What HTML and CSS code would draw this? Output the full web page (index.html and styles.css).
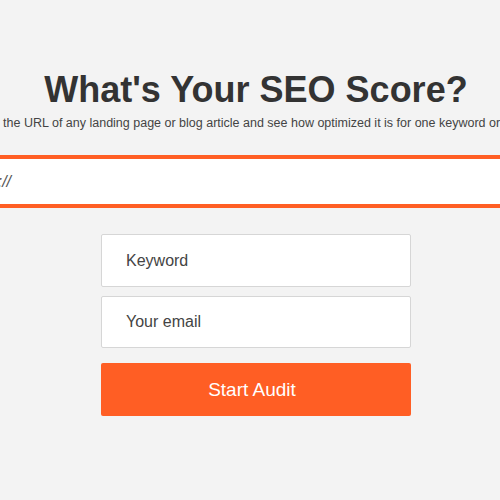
FILE: index.html
```html
<!DOCTYPE html>
<html lang="en">
<head>
<meta charset="utf-8">
<title>SEO Score</title>
<link rel="stylesheet" href="styles.css">
</head>
<body>
<main class="page">
  <section class="hero">
    <h1 class="title">What's Your SEO Score?</h1>
    <p class="subtitle">Enter the URL of any landing page or blog article and see how optimized it is for one keyword or phrase.</p>
    <div class="url-field"><span class="url-placeholder">http://</span></div>
    <form class="audit-form">
      <div class="field"><span class="placeholder">Keyword</span></div>
      <div class="field"><span class="placeholder">Your email</span></div>
      <button class="submit" type="button">Start Audit</button>
    </form>
  </section>
</main>
</body>
</html>
```

FILE: styles.css
```css
html, body {
  margin: 0;
  padding: 0;
  background: #f3f3f3;
  overflow: hidden;
}
body {
  font-family: "Liberation Sans", Arial, sans-serif;
  color: #333;
}
.page {
  box-sizing: border-box;
  display: flex;
  justify-content: center;
  width: 500px;
  height: 500px;
  padding-left: 12px;
}
.hero {
  flex-shrink: 0;
  width: 640px;
  display: flex;
  flex-direction: column;
  align-items: center;
  padding-top: 66px;
}
.title {
  margin: 0;
  font-size: 36px;
  line-height: 48px;
  font-weight: bold;
  color: #333;
  white-space: nowrap;
}
.subtitle {
  margin: 0;
  padding-left: 3px;
  font-size: 12.5px;
  line-height: 18px;
  color: #444;
  white-space: nowrap;
}
.url-field {
  box-sizing: border-box;
  align-self: stretch;
  margin-top: 23px;
  height: 53px;
  border: 4px solid #ff5e24;
  background: #fff;
  display: flex;
  align-items: center;
  padding-left: 31px;
}
.url-placeholder {
  font-size: 16px;
  font-style: italic;
  color: #555;
}
.audit-form {
  margin-top: 26px;
  width: 310px;
  display: flex;
  flex-direction: column;
  gap: 9px;
}
.field {
  box-sizing: border-box;
  height: 53px;
  background: #fff;
  border: 1px solid #d6d6d6;
  border-radius: 2px;
  display: flex;
  align-items: center;
  padding-left: 24px;
}
.field:nth-child(2) {
  height: 52px;
}
.placeholder {
  font-size: 16px;
  color: #444;
}
.submit {
  margin-top: 6px;
  height: 53px;
  border: none;
  border-radius: 2px;
  background: #ff5e24;
  color: #fff;
  font-family: "Liberation Sans", Arial, sans-serif;
  font-size: 19px;
  padding: 0 8px 0 0;
}
```
